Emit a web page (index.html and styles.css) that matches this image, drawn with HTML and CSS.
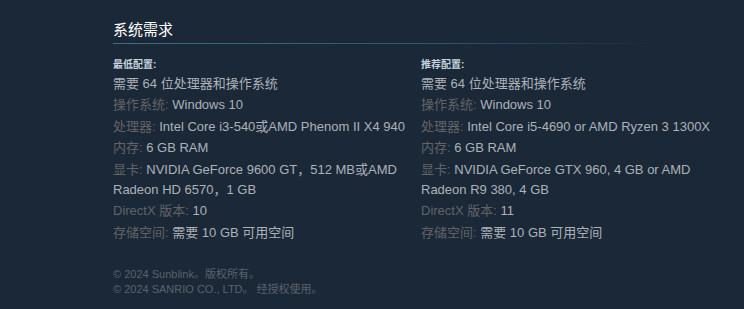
FILE: index.html
```html
<!DOCTYPE html>
<html lang="zh-CN">
<head>
<meta charset="utf-8">
<link rel="stylesheet" href="styles.css">
</head>
<body>
<div class="page">
  <h2 class="title">系统需求</h2>
  <div class="cols">
    <div class="col">
      <div class="head">最低配置:</div>
      <ul class="reqs">
        <li>需要 64 位处理器和操作系统</li>
        <li><span class="lbl">操作系统:</span> Windows 10</li>
        <li><span class="lbl">处理器:</span> Intel Core i3-540或AMD Phenom II X4 940</li>
        <li><span class="lbl">内存:</span> 6 GB RAM</li>
        <li><span class="lbl">显卡:</span> NVIDIA GeForce 9600 GT，512 MB或AMD Radeon HD 6570，1 GB</li>
        <li><span class="lbl">DirectX 版本:</span> 10</li>
        <li><span class="lbl">存储空间:</span> 需要 10 GB 可用空间</li>
      </ul>
    </div>
    <div class="col">
      <div class="head">推荐配置:</div>
      <ul class="reqs">
        <li>需要 64 位处理器和操作系统</li>
        <li><span class="lbl">操作系统:</span> Windows 10</li>
        <li><span class="lbl">处理器:</span> Intel Core i5-4690 or AMD Ryzen 3 1300X</li>
        <li><span class="lbl">内存:</span> 6 GB RAM</li>
        <li><span class="lbl">显卡:</span> NVIDIA GeForce GTX 960, 4 GB or AMD Radeon R9 380, 4 GB</li>
        <li><span class="lbl">DirectX 版本:</span> 11</li>
        <li><span class="lbl">存储空间:</span> 需要 10 GB 可用空间</li>
      </ul>
    </div>
  </div>
  <div class="legal">
    <div>© 2024 Sunblink。版权所有。</div>
    <div>© 2024 SANRIO CO., LTD。 经授权使用。</div>
  </div>
</div>
</body>
</html>
```
FILE: styles.css
```css
html, body {
  margin: 0;
  padding: 0;
  background: #1b2838;
}
.page {
  padding: 21px 0 0 113px;
  font-family: Arial, "Liberation Sans", "Noto Sans CJK SC", sans-serif;
}
.title {
  margin: 0;
  width: 548px;
  font-size: 15px;
  font-weight: normal;
  line-height: 18px;
  color: #ffffff;
  padding-bottom: 4px;
  border-bottom: 1px solid transparent;
  border-image: linear-gradient(to right, #3b6e8c 0%, #2f5670 60%, rgba(47, 86, 112, 0) 100%) 1;
}
.cols {
  display: grid;
  grid-template-columns: 296px 300px;
  column-gap: 12px;
  margin-top: 14px;
}
.head {
  font-size: 10px;
  font-weight: bold;
  color: #c6d4df;
  line-height: 14px;
  margin-bottom: 1.5px;
}
.reqs {
  list-style: none;
  margin: 0;
  padding: 0;
  font-size: 13px;
  line-height: 20px;
  color: #acb2b8;
}
.reqs li {
  margin-bottom: 1.5px;
}
.lbl {
  color: #626366;
}
.legal {
  margin-top: 23px;
  font-size: 11px;
  line-height: 15px;
  color: #5a626b;
}
```
